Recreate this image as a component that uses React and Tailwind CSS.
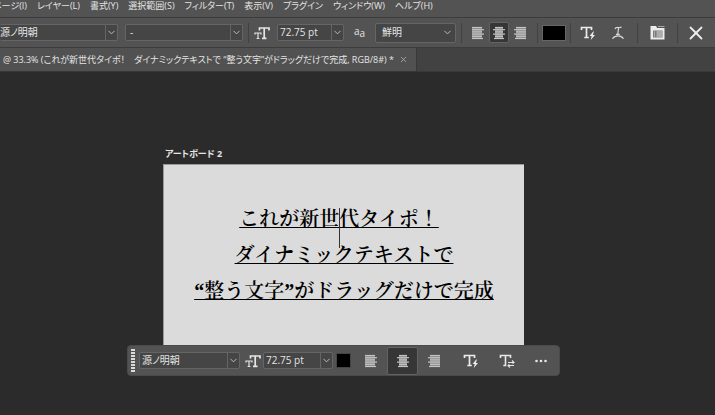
import { ChevronDown, X } from "lucide-react";
import clsx from "clsx";

const MENUS = [
  "レイヤー(L)",
  "書式(Y)",
  "選択範囲(S)",
  "フィルター(T)",
  "表示(V)",
  "プラグイン",
  "ウィンドウ(W)",
  "ヘルプ(H)",
];

const ALIGN_ROWS = {
  left: [[1, 11], [1, 13], [1, 11], [1, 13], [1, 11], [1, 12]],
  center: [[3, 11], [1, 13], [3, 11], [1, 13], [3, 11], [2, 12]],
  right: [[3, 13], [1, 13], [3, 13], [1, 13], [3, 13], [2, 13]],
};

function AlignIcon({ type }) {
  const [from, to] = ALIGN_ROWS[type][0];
  return (
    <svg width="14" height="14" viewBox="0 0 14 14" stroke="#c4c4c4" strokeWidth="1.2">
      <rect x={from} y="1" width={to - from} height="12" fill="#8a8a8a" stroke="none" />
      {ALIGN_ROWS[type].map(([x1, x2], i) => (
        <line key={i} x1={x1} x2={x2} y1={1.5 + i * 2.2} y2={1.5 + i * 2.2} />
      ))}
    </svg>
  );
}

function TextSizeIcon() {
  return (
    <svg width="16" height="14" viewBox="0 0 16 14" fill="none" stroke="#e6e6e6">
      <path d="M5.5 4.5V2h9.5v2.5M10.2 2v10.5M8 12.4h4.5" strokeWidth="1.7" />
      <path d="M1 8.5V7h6v1.5M4 7v5.5M2.6 12.5h2.8" strokeWidth="1.2" />
    </svg>
  );
}

function TypeBoltIcon() {
  return (
    <svg width="16" height="16" viewBox="0 0 16 16" fill="none" stroke="#ececec">
      <path d="M1.5 5V2.5h10V5M6.5 2.5v10M4.3 12.5h4.5" strokeWidth="1.7" />
      <path d="M13.2 6.5 9.6 11h2.1l-1 4L15 10h-2.2l1.2-3.5z" fill="#ececec" stroke="none" />
    </svg>
  );
}

function TypeSwapIcon() {
  return (
    <svg width="16" height="16" viewBox="0 0 16 16" fill="none" stroke="#e6e6e6">
      <path d="M1.5 5V2.5h10V5M6.5 2.5v10M4.3 12.5h3" strokeWidth="1.6" />
      <path d="M9 9.5h6M13 7.5l2 2-1.5 1M15 12.5H9M11 14.5l-2-2 1.500-1" strokeWidth="1.1" />
    </svg>
  );
}

function WarpIcon() {
  return (
    <svg width="14" height="14" viewBox="0 0 14 14" fill="none" stroke="#d6d6d6" strokeWidth="1.2">
      <path d="M4 3.2C4.5 1 6 1.5 7.5 1.5S10 1.8 10.5.8M7.6 1.5 6.8 8M5 8.3h3.8" />
      <path d="M1.500 12.800C3 10.4 5 9.8 7 9.800s4 .6 5.500 3" />
    </svg>
  );
}

function PanelIcon() {
  return (
    <svg width="15" height="15" viewBox="0 0 15 15">
      <path d="M.5 1h5.5l1.2 2h7.300v11.500H.5z" fill="#ececec" />
      <path d="M8 1.500h6.500" stroke="#a8a8a8" />
      <path d="M3 5.500h9.500v7H3z" fill="#7a7a7a" />
      <path d="M4 7h1M4 9h1M4 11h1M6.5 7H12M6.5 9H12M6.5 11H12" stroke="#dedede" />
    </svg>
  );
}

function Separator() {
  return <span className="h-5 w-px shrink-0 bg-[#414141]" />;
}

function IconButton({ label, active, className, children }) {
  return (
    <button
      type="button"
      aria-label={label}
      aria-pressed={active}
      className={clsx(
        "flex shrink-0 items-center justify-center",
        active && "rounded-xs border border-[#636363] bg-[#363636]",
        className
      )}
    >
      {children}
    </button>
  );
}

function Chevron() {
  return <ChevronDown size={11} strokeWidth={2} color="#c4c4c4" />;
}

function FontSelect({ label, value, className, inset = "pl-1" }) {
  return (
    <label className={clsx("flex h-[17px] shrink-0 items-stretch rounded-xs border border-[#656565] bg-[#454545]", className)}>
      <select aria-label={label} className={clsx("min-w-0 flex-1 appearance-none outline-none", inset)}>
        <option>{value}</option>
      </select>
      <span className="flex w-3 items-center justify-center border-l border-[#656565]">
        <Chevron />
      </span>
    </label>
  );
}

function SizeField({ className }) {
  return (
    <div className={clsx("flex h-[17px] shrink-0 items-stretch rounded-xs border border-[#656565] bg-[#454545]", className)}>
      <input
        aria-label="フォントサイズ"
        defaultValue="72.75 pt"
        className="min-w-0 flex-1 pl-[2px] font-['Open_Sans',sans-serif] text-[10px] outline-none"
      />
      <button type="button" aria-label="サイズを選択" className="flex w-3 items-center justify-center border-l border-[#656565]">
        <Chevron />
      </button>
    </div>
  );
}

function MenuBar() {
  return (
    <nav className="flex h-[17px] items-end gap-[10px] overflow-hidden bg-[#535353] pb-[6px] text-[9px] leading-[11px] whitespace-nowrap">
      <div className="flex w-[27px] shrink-0 justify-end">
        <button type="button">イメージ(I)</button>
      </div>
      {MENUS.map((menu) => (
        <button key={menu} type="button" className="shrink-0">
          {menu}
        </button>
      ))}
    </nav>
  );
}

function OptionsBar() {
  return (
    <div className="flex h-[30px] items-center overflow-hidden border-t border-[#3c3c3c] bg-[#535353]">
      <FontSelect label="フォント" value="源ノ明朝" className="w-[118px] border-l-0" inset="pl-0" />
      <FontSelect label="スタイル" value="-" className="ml-[7px] w-[118px]" />
      <div className="ml-[5px] flex shrink-0 items-center">
        <Separator />
        <span className="mr-[7px] ml-[5px]">
          <TextSizeIcon />
        </span>
        <SizeField className="w-[67px]" />
      </div>
      <span className="ml-[10px] flex h-4 w-3 shrink-0 font-['Open_Sans',sans-serif] text-[10px] leading-3">
        a<span className="pt-[2px]">a</span>
      </span>
      <label className="mr-[5px] ml-[9px] flex h-5 w-[81px] shrink-0 items-center rounded-xs border border-[#656565] bg-[#454545] pr-[2px]">
        <select aria-label="アンチエイリアス" className="min-w-0 flex-1 appearance-none pl-[6px] outline-none">
          <option>鮮明</option>
        </select>
        <Chevron />
      </label>
      <Separator />
      <div className="mr-[7px] ml-[6px] flex shrink-0 items-center">
        <IconButton label="左揃え" className="h-[21px] w-5">
          <AlignIcon type="left" />
        </IconButton>
        <IconButton label="中央揃え" active className="mx-px h-[21px] w-5">
          <AlignIcon type="center" />
        </IconButton>
        <IconButton label="右揃え" className="h-[21px] w-5">
          <AlignIcon type="right" />
        </IconButton>
      </div>
      <Separator />
      <button type="button" aria-label="文字カラー" className="mx-1 h-[16px] w-6 shrink-0 border border-[#666] bg-black" />
      <Separator />
      <IconButton label="ダイナミックテキスト" className="ml-2 h-5 w-[18px]">
        <TypeBoltIcon />
      </IconButton>
      <IconButton label="ワープテキスト" className="mr-[10px] ml-3 h-5 w-[18px]">
        <WarpIcon />
      </IconButton>
      <Separator />
      <IconButton label="文字パネル" className="mx-3 h-5 w-[15px]">
        <PanelIcon />
      </IconButton>
      <Separator />
      <IconButton label="キャンセル" className="ml-[7px] h-5 w-[22px]">
        <X size={22} strokeWidth={2} color="#ececec" />
      </IconButton>
    </div>
  );
}

function DocumentTabs() {
  return (
    <div className="flex h-[25px] border-t border-b border-t-[#3c3c3c] border-b-[#383838] bg-[#424242]">
      <div className="flex w-[417px] items-center justify-end gap-[5px] overflow-hidden border-r border-[#393939] bg-[#515151] pr-2 text-[9px] whitespace-nowrap">
        <span className="shrink-0">
          @ 33.3% (これが新世代タイポ！　ダイナミックテキストで “整う文字”がドラッグだけで完成, RGB/8#) *
        </span>
        <button type="button" aria-label="閉じる" className="shrink-0">
          <X size={9} strokeWidth={2} color="#b4b4b4" />
        </button>
      </div>
    </div>
  );
}

function Artboard() {
  return (
    <section className="w-[361px]">
      <h1 className="mb-[2px] pl-[2px] text-[9px] leading-4 font-bold">アートボード 2</h1>
      <div className="h-[181px] border-t border-l border-[#9a9a9a] bg-[#dbdbdb] pt-9 text-center font-['Liberation_Serif','Noto_Serif_CJK_JP','Noto_Sans_CJK_JP',serif] text-[20px] leading-9 font-semibold whitespace-nowrap text-black [font-feature-settings:normal]">
        <div className="underline decoration-1 underline-offset-1 [text-decoration-skip-ink:none]">
          <p className="pr-[10px]">
            これが新世
            <span className="relative">
              <span className="absolute top-0 left-0 h-10 w-px bg-[#333]" />
            </span>
            代タイポ！
          </p>
          <p>ダイナミックテキストで</p>
          <p>“整う文字”がドラッグだけで完成</p>
        </div>
      </div>
    </section>
  );
}

function ContextBar() {
  return (
    <div className="flex h-[31px] w-[433px] items-center rounded-sm border border-[#4a4a4a] bg-[#535353] px-[3px]">
      <span className="flex shrink-0 flex-col gap-px">
        {Array.from({ length: 8 }, (_, i) => (
          <span key={i} className="h-[2px] w-1 bg-[#dadada]" />
        ))}
      </span>
      <FontSelect label="フォント" value="源ノ明朝" className="ml-1 w-[101px]" inset="pl-[2px]" />
      <span className="mr-[2px] ml-[5px] shrink-0">
        <TextSizeIcon />
      </span>
      <SizeField className="w-[70px]" />
      <button type="button" aria-label="文字カラー" className="mr-[5px] ml-[3px] h-[15px] w-[15px] shrink-0 border border-[#444] bg-black" />
      <IconButton label="左揃え" className="h-7 w-[30px]">
        <AlignIcon type="left" />
      </IconButton>
      <IconButton label="中央揃え" active className="mx-px h-7 w-[31px]">
        <AlignIcon type="center" />
      </IconButton>
      <IconButton label="右揃え" className="h-7 w-[30px]">
        <AlignIcon type="right" />
      </IconButton>
      <IconButton label="ダイナミックテキスト" className="ml-1 h-7 w-[36px]">
        <TypeBoltIcon />
      </IconButton>
      <IconButton label="テキストの切り替え" className="h-7 w-[36px]">
        <TypeSwapIcon />
      </IconButton>
      <IconButton label="その他" className="h-7 flex-1">
        <svg width="12" height="4" viewBox="0 0 12 4" fill="#e6e6e6">
          <circle cx="1.5" cy="2" r="1.3" />
          <circle cx="6" cy="2" r="1.3" />
          <circle cx="10.5" cy="2" r="1.3" />
        </svg>
      </IconButton>
    </div>
  );
}

export default function App() {
  return (
    <div className="flex min-h-screen flex-col overflow-hidden bg-[#2b2b2b] font-['Open_Sans','Noto_Sans_CJK_JP',sans-serif] text-[10px] text-[#e4e4e4] [font-feature-settings:'palt']">
      <MenuBar />
      <OptionsBar />
      <DocumentTabs />
      <main className="flex flex-1 flex-col items-center pt-[74px] pr-7">
        <Artboard />
        <ContextBar />
      </main>
    </div>
  );
}
